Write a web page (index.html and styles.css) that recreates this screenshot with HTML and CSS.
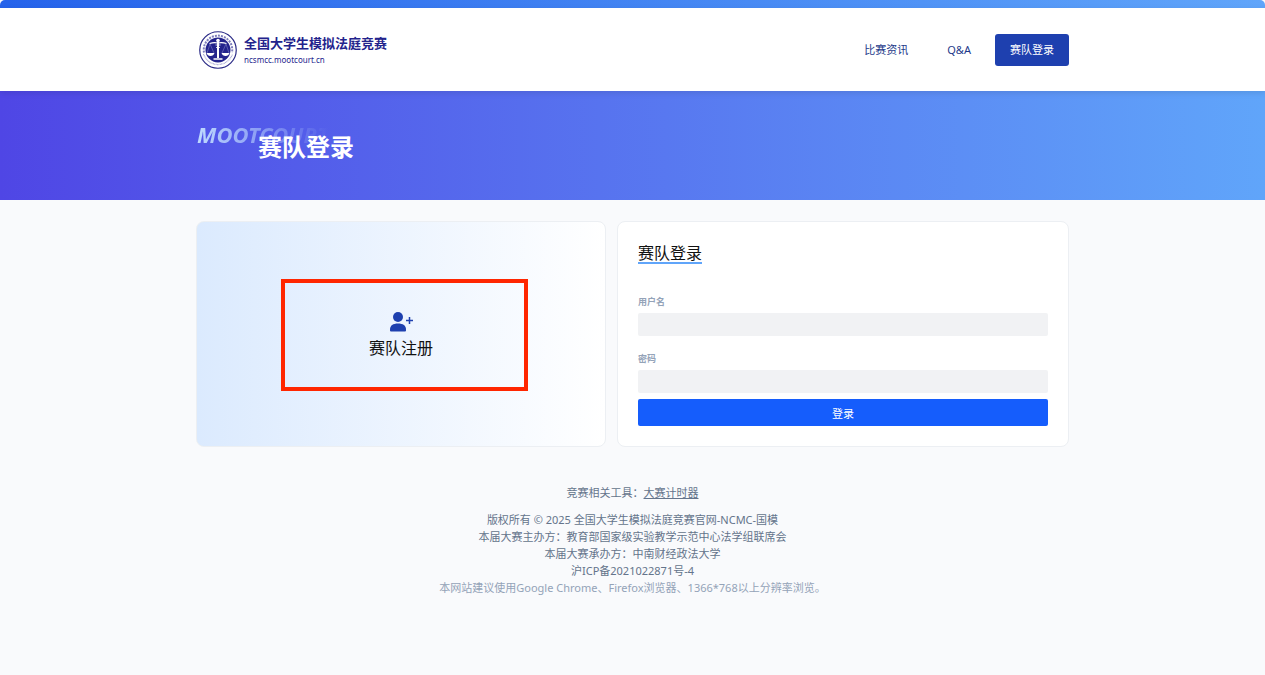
FILE: index.html
```html
<!DOCTYPE html>
<html lang="zh-CN">
  <head>
    <meta charset="UTF-8" />
    <meta name="viewport" content="width=device-width, initial-scale=1.0" />
    <title>赛队登录 - 全国大学生模拟法庭竞赛</title>
    <link rel="stylesheet" href="styles.css">
  </head>
  <body>
    <div class="top-bar"></div>

    <header class="header">
      <div class="container header-inner">
        <a class="brand" href="#">
          <svg class="brand-logo" viewBox="0 0 76 76" aria-hidden="true">
            <circle cx="38" cy="38" r="36.5" fill="#fff" stroke="#2a2a86" stroke-width="2.4" />
            <!-- lettering ring -->
            <path d="M10 43A28.5 28.5 0 1 1 66 43" fill="none" stroke="#7d7dbc" stroke-width="4" stroke-dasharray="4 2.2" />
            <path d="M9 46A30.5 30.5 0 0 0 67 46" fill="none" stroke="#a3a3d0" stroke-width="2.5" stroke-dasharray="1.6 1.2" />
            <circle cx="38" cy="38" r="25" fill="#23238c" />
            <!-- scales -->
            <g fill="none" stroke="#fff" stroke-width="1.6">
              <path d="M21 25Q30 22 38 24Q46 22 55 25" stroke-width="2.4" />
              <path d="M22 26L16 44M22 26L30 44M54 26L46 44M54 26L60 44" stroke="#8f8fd0" stroke-width="1" />
              <path d="M38 17V54" stroke-width="4" />
              <path d="M33 28H43M34 33H42" />
              <path d="M29 56H47" stroke-width="3" />
            </g>
            <path d="M15 44H31Q29 50 23 50T15 44ZM45 44H61Q59 50 53 50T45 44Z" fill="#fff" />
            <circle cx="38" cy="19" r="3.6" fill="#fff" />
          </svg>
          <span class="brand-text">
            <span class="brand-name">全国大学生模拟法庭竞赛</span>
            <span class="brand-url">ncsmcc.mootcourt.cn</span>
          </span>
        </a>
        <nav class="nav">
          <a class="nav-link" href="#">比赛资讯</a>
          <a class="nav-link" href="#">Q&amp;A</a>
          <a class="nav-link nav-login" href="#login">赛队登录</a>
        </nav>
      </div>
    </header>

    <section class="hero">
      <div class="container hero-inner">
        <span class="hero-bg-text" aria-hidden="true">MOOTCOURT</span>
        <h1 class="hero-title">赛队登录</h1>
      </div>
    </section>

    <main class="container cards">
      <section class="card register">
        <a class="register-link" href="#">
          <svg class="register-icon" viewBox="0 0 24 20" aria-hidden="true">
            <circle cx="9" cy="5" r="5" />
            <path d="M1 18.500V17.500C1 13.500 4 11.500 9 11.500S17 13.500 17 17.500V18.500Q17 19.500 16 19.500H2Q1 19.500 1 18.500Z" />
            <path d="M20.500 5V12M17 8.500H24" fill="none" stroke="#1e40af" stroke-width="1.500" />
          </svg>
          <span>赛队注册</span>
        </a>
        <div class="highlight"></div>
      </section>

      <section class="card login" id="login">
        <h2 class="login-title">赛队登录</h2>
        <form class="login-form">
          <label for="username">用户名</label>
          <input type="text" id="username" />
          <label for="password">密码</label>
          <input type="password" id="password" />
          <button type="submit">登录</button>
        </form>
      </section>
    </main>

    <footer class="footer">
      <p class="tools">竞赛相关工具：<a href="#">大赛计时器</a></p>
      <p>版权所有 © 2025 全国大学生模拟法庭竞赛官网-NCMC-国模</p>
      <p>本届大赛主办方：教育部国家级实验教学示范中心法学组联席会</p>
      <p>本届大赛承办方：中南财经政法大学</p>
      <p>沪ICP备2021022871号-4</p>
      <p class="browser-tip">本网站建议使用Google Chrome、Firefox浏览器、1366*768以上分辨率浏览。</p>
    </footer>
  </body>
</html>
```
FILE: styles.css
```css
* {
  box-sizing: border-box;
}

body {
  margin: 0;
  min-height: 100vh;
  font-family: "Noto Sans", "Noto Sans CJK SC", sans-serif;
  background: #f9fafc;
  color: #111;
}

a {
  color: inherit;
  text-decoration: none;
}

.container {
  width: 69%;
  max-width: 1200px;
  margin: 0 auto;
}

.top-bar {
  height: 8px;
  border-radius: 5px 5px 0 0;
  background: linear-gradient(to right, #2563eb, #60a5fa);
}

.header {
  position: relative;
  background: #fff;
  box-shadow: 0 2px 6px rgba(0, 0, 0, 0.1);
}

.header-inner {
  display: flex;
  justify-content: space-between;
  align-items: center;
  min-height: 83px;
}

.brand {
  display: flex;
  align-items: center;
  gap: 7px;
  padding-left: 3px;
  color: #23238c;
}

.brand-logo {
  width: 38px;
  height: 38px;
}

.brand-text {
  display: flex;
  flex-direction: column;
}

.brand-name {
  font-size: 13px;
  font-weight: bold;
  line-height: 20px;
}

.brand-url {
  font-size: 8px;
  line-height: 14px;
}

.nav {
  display: flex;
  align-items: center;
  gap: 24px;
}

.nav-link {
  padding: 0 15px 0 0;
  font-size: 11px;
  line-height: 32px;
  color: #1e3a8a;
}

.nav-link + .nav-link {
  padding: 0;
}

.nav-link + .nav-login {
  padding: 0 15px;
  border-radius: 3px;
  background: #1e40af;
  color: #fff;
}

.hero {
  background: linear-gradient(to right, #4f46e5, #60a5fa);
}

.hero-inner {
  display: flex;
  align-items: center;
  min-height: 109px;
  position: relative;
}

.hero-bg-text {
  position: absolute;
  top: 29px;
  left: 1px;
  font-size: 22px;
  font-weight: bold;
  font-style: italic;
  line-height: 28px;
  background: linear-gradient(to right, #bfdbfe, rgba(191, 219, 254, 0));
  -webkit-background-clip: text;
  background-clip: text;
  color: transparent;
}

.hero-title {
  position: relative;
  margin: 0;
  padding: 2px 0 0 62px;
  font-size: 24px;
  line-height: 32px;
  color: #fff;
}

.cards {
  display: grid;
  grid-template-columns: 410fr 452fr;
  gap: 11px;
  margin-top: 21px;
}

.card {
  border: 1px solid #eceff3;
  border-radius: 8px;
  background: #fff;
}

.register {
  position: relative;
  display: flex;
  justify-content: center;
  align-items: center;
  background: linear-gradient(to right, #dbeafe, #fff);
}

.register-link {
  display: flex;
  flex-direction: column;
  align-items: center;
  gap: 4px;
  padding-top: 3px;
  font-size: 16px;
  line-height: 24px;
}

.register-icon {
  width: 24px;
  height: 20px;
  fill: #1e40af;
}

/* red frame around the sign-up entry */
.highlight {
  position: absolute;
  top: 57px;
  right: 19%;
  bottom: 55px;
  left: 84px;
  border: 4px solid #ff2600;
  pointer-events: none;
}

.login {
  padding: 20px;
}

.login-title {
  width: fit-content;
  margin: 0 0 31px;
  box-shadow: inset 0 -2px #60a5fa;
  font-size: 16px;
  font-weight: normal;
  line-height: 22px;
}

.login-form {
  display: flex;
  flex-direction: column;
}

.login-form label {
  margin-bottom: 4px;
  font-size: 9px;
  font-weight: bold;
  line-height: 14px;
  color: #94a3b8;
}

.login-form input {
  height: 23px;
  margin-bottom: 16px;
  padding: 0 8px;
  border: 0;
  border-radius: 2px;
  background: #f1f2f4;
  font: inherit;
  font-size: 11px;
}

.login-form #password {
  margin-bottom: 6px;
}

.login-form button {
  height: 27px;
  padding: 0;
  border: 0;
  border-radius: 2px;
  background: #155dfc;
  font-family: inherit;
  font-size: 11px;
  color: #fff;
}

.footer {
  margin-top: 37px;
  text-align: center;
  font-size: 11px;
  line-height: 17px;
  color: #64748b;
}

.footer p {
  margin: 0;
}

.footer .tools {
  margin-bottom: 10px;
}

.tools a {
  text-decoration: underline;
}

.footer .browser-tip {
  color: #94a3b8;
}
```
